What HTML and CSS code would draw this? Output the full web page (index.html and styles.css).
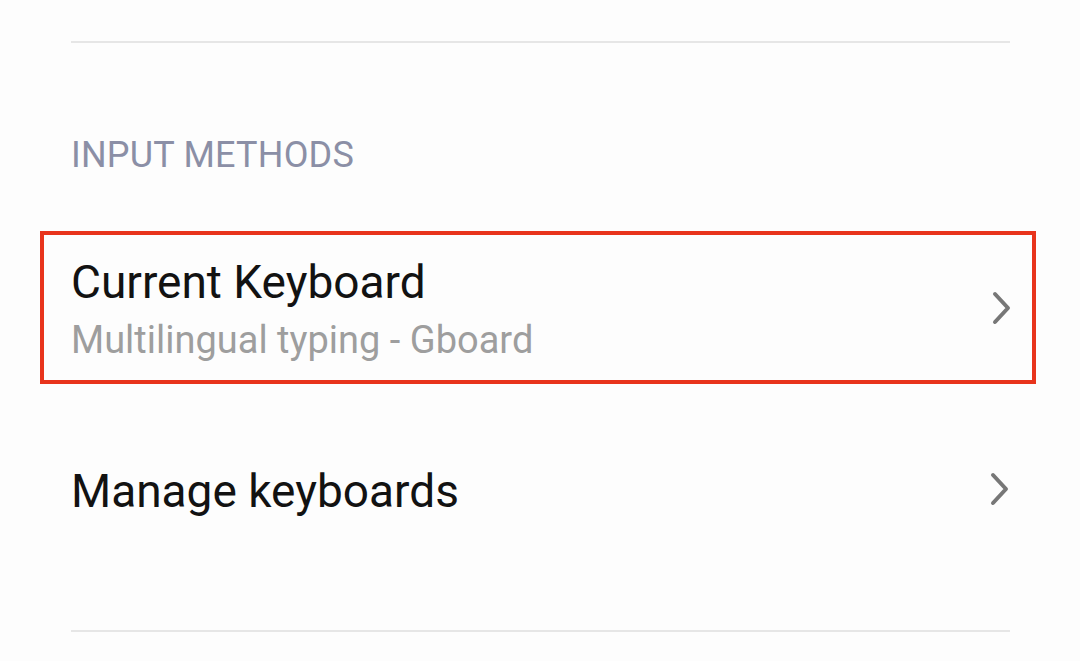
FILE: index.html
```html
<!DOCTYPE html>
<html lang="en">
<head>
    <meta charset="UTF-8">
    <meta name="viewport" content="width=device-width, initial-scale=1.0">
    <title>Input methods</title>
    <link rel="stylesheet" href="styles.css">
</head>
<body>
    <div class="settings">
        <div class="divider top"></div>

        <h2 class="sectionTitle">INPUT METHODS</h2>

        <div class="item highlight">
            <div class="itemText">
                <div class="itemTitle">Current Keyboard</div>
                <div class="itemSub">Multilingual typing - Gboard</div>
            </div>
            <svg class="chevron" viewBox="0 0 20 34" width="20" height="34">
                <path d="M3 3 L16 17 L3 31" fill="none" stroke="#777" stroke-width="4" stroke-linecap="round" stroke-linejoin="round"/>
            </svg>
        </div>

        <div class="item plain">
            <div class="itemText">
                <div class="itemTitle">Manage keyboards</div>
            </div>
            <svg class="chevron" viewBox="0 0 20 34" width="20" height="34">
                <path d="M3 3 L16 17 L3 31" fill="none" stroke="#777" stroke-width="4" stroke-linecap="round" stroke-linejoin="round"/>
            </svg>
        </div>

        <div class="divider bottom"></div>
    </div>
</body>
</html>
```

FILE: styles.css
```css
body {
    margin: 0;
    background-color: #fdfdfd;
    font-family: Roboto, "Noto Sans", Arial, sans-serif;
    color: #111;
}
.settings {
    padding: 41px 70px 0 71px;
}
.divider {
    height: 2px;
    background-color: #e6e6e6;
}
.sectionTitle {
    margin: 0;
    padding-top: 92px;
    font-size: 36px;
    font-weight: 400;
    color: #8b8fa6;
    line-height: 40px;
    letter-spacing: 0.2px;
}
.item {
    display: flex;
    align-items: center;
    justify-content: space-between;
    box-sizing: border-box;
}
.highlight {
    margin: 56px -26px 0 -31px;
    padding: 0 20px 0 27px;
    height: 153px;
    border: 4px solid #e8341c;
}
.highlight .itemText {
    padding-top: 3px;
}
.plain {
    height: 210px;
}
.plain .itemText {
    padding-top: 4px;
}
.itemTitle {
    font-size: 46px;
    line-height: 54px;
    color: #121212;
}
.itemSub {
    font-size: 38px;
    line-height: 46px;
    color: #9e9e9e;
    margin-top: 8px;
}
.chevron {
    display: block;
}
.bottom {
    margin-top: 36px;
}
```
